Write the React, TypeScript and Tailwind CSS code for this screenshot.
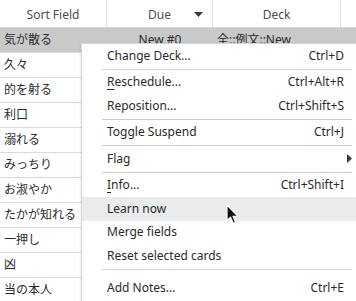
const rows = [
  '気が散る',
  '久々',
  '的を射る',
  '利口',
  '溺れる',
  'みっちり',
  'お淑やか',
  'たかが知れる',
  '一押し',
  '凶',
  '当の本人',
];

type MenuEntry =
  | { sep: true; tall?: boolean }
  | { sep?: false; label: string; shortcut?: string; mnemonic?: boolean; submenu?: boolean; active?: boolean; dim?: boolean };

const menu: MenuEntry[] = [
  { label: 'Change Deck...', shortcut: 'Ctrl+D' },
  { sep: true },
  { label: 'Reschedule...', shortcut: 'Ctrl+Alt+R', mnemonic: true },
  { label: 'Reposition...', shortcut: 'Ctrl+Shift+S' },
  { sep: true },
  { label: 'Toggle Suspend', shortcut: 'Ctrl+J' },
  { sep: true },
  { label: 'Flag', submenu: true },
  { sep: true },
  { label: 'Info...', shortcut: 'Ctrl+Shift+I', mnemonic: true },
  { label: 'Learn now', active: true },
  { label: 'Merge fields' },
  { label: 'Reset selected cards' },
  { sep: true, tall: true },
  { label: 'Add Notes...', shortcut: 'Ctrl+E' },
  { label: 'Export Notes...', shortcut: 'Ctrl+Shift+E', dim: true },
];

function Cursor() {
  return (
    <svg className="absolute left-[226px] top-[204px]" width="14" height="21" viewBox="0 0 14 21">
      <path
        d="M1 1 L1 16.5 L4.6 13.2 L7.2 19.2 L9.6 18.2 L7 12.3 L12 12.3 Z"
        fill="#111"
        stroke="#fff"
        strokeWidth="1.2"
        strokeLinejoin="round"
      />
    </svg>
  );
}

export default function App() {
  return (
    <div
      className="relative w-[356px] h-[301px] overflow-hidden bg-white text-[12px] text-[#2b2b2b]"
      style={{ fontFamily: '"Noto Sans", "Noto Sans CJK JP", sans-serif' }}
    >
      {/* header */}
      <div className="flex h-[28px] border-b border-[#d6d6d6] text-[#4d4d4d]">
        <div className="w-[107px] shrink-0 border-r border-[#e2e2e2] flex items-center justify-center pt-[2px]">Sort Field</div>
        <div className="w-[106px] shrink-0 border-r border-[#e2e2e2] flex items-center justify-center relative pt-[2px]">
          Due
          <svg className="absolute right-[9px] top-[12px]" width="9" height="5" viewBox="0 0 9 5">
            <path d="M0 0 H9 L4.5 5 Z" fill="#3a3a3a" />
          </svg>
        </div>
        <div className="w-[128px] shrink-0 border-r border-[#e2e2e2] flex items-center justify-center pt-[2px]">Deck</div>
        <div className="flex-1" />
      </div>

      {/* rows */}
      {rows.map((r, i) => (
        <div
          key={i}
          className={`flex h-[25px] border-b border-[#dadada] ${i === 0 ? 'bg-[#c9c9c9]' : ''}`}
        >
          <div className="w-[107px] shrink-0 flex items-center pl-[4px] whitespace-nowrap">{r}</div>
          {i === 0 && (
            <>
              <div className="w-[106px] shrink-0 flex items-center justify-center">New #0</div>
              <div className="w-[128px] shrink-0 flex items-center pl-[4px] whitespace-nowrap overflow-hidden">全::例文::New</div>
            </>
          )}
          <div className="flex-1" />
        </div>
      ))}

      {/* context menu */}
      <div className="absolute left-[81px] top-[43px] w-[292px] bg-white border border-[#d4d4d4] shadow-[0_1px_3px_rgba(0,0,0,0.12)] text-[#2a2a2a]">
        {menu.map((m, i) => {
          if (m.sep) {
            return (
              <div key={i} className={m.tall ? 'pt-[1px] pb-[7px]' : 'pt-[1px] pb-[1px]'}>
                <div className="mx-5 h-px bg-[#cfcfcf]" />
              </div>
            );
          }
          return (
            <div
              key={i}
              className={`relative flex items-center justify-between h-[23.5px] pl-[25px] pr-[28px] ${
                m.active ? 'bg-[#e9ebed]' : ''
              } ${m.dim ? 'text-[#b8b8b8]' : ''}`}
            >
              <span>
                {m.mnemonic ? (
                  <>
                    <span className="underline underline-offset-[3px]">{m.label[0]}</span>
                    {m.label.slice(1)}
                  </>
                ) : (
                  m.label
                )}
              </span>
              {m.shortcut && <span>{m.shortcut}</span>}
              {m.submenu && (
                <svg className="absolute left-[265px] top-[7px]" width="5" height="9" viewBox="0 0 5 9">
                  <path d="M0 0 L5 4.5 L0 9 Z" fill="#3a3a3a" />
                </svg>
              )}
            </div>
          );
        })}
      </div>

      <Cursor />
    </div>
  );
}
